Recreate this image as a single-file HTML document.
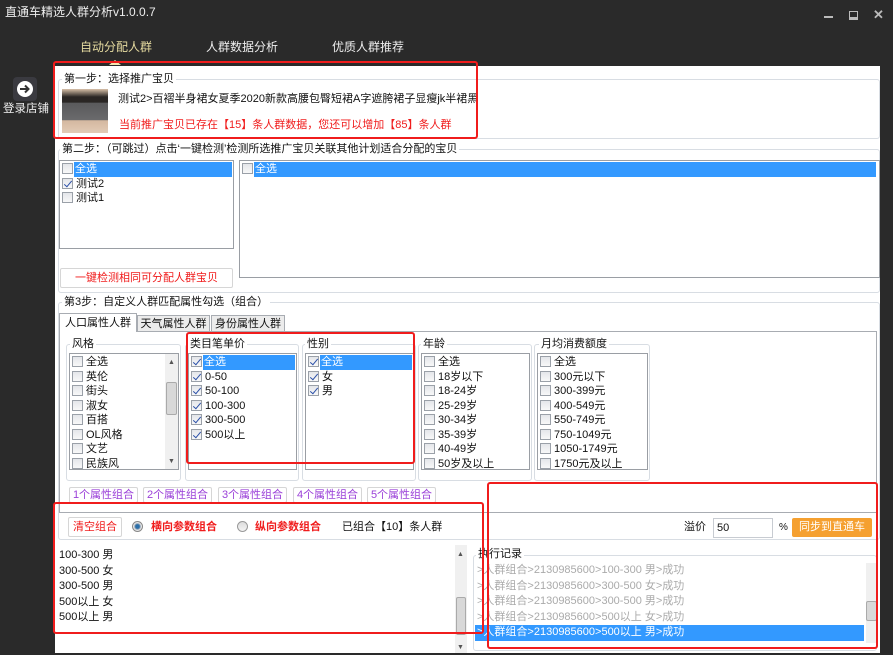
<!DOCTYPE html>
<html><head><meta charset="utf-8">
<style>
*{box-sizing:border-box;margin:0;padding:0}
body{width:893px;height:653px;overflow:hidden;background:#2a2a2a;font-family:"Liberation Sans","Noto Sans CJK SC",sans-serif;font-size:11px;color:#111;position:relative}
.a{position:absolute}
.t{position:absolute;white-space:nowrap;line-height:14px}
.grp{position:absolute;border:1px solid #d8dde3;border-radius:3px}
.lbl{position:absolute;background:#fff;padding:0 2px;white-space:nowrap;line-height:14px;font-size:11px}
.list{position:absolute;background:#fff;border:1px solid #9a9ea4}
.it{height:14.5px;line-height:14.5px;white-space:nowrap;padding-left:2px;position:relative}
.cb{display:inline-block;width:11px;height:11px;border:1px solid #9aa0a8;background:linear-gradient(#e4e6ea,#f8f8f8);vertical-align:-2px;margin-right:3px;position:relative}
.cb.c::after{content:"";position:absolute;left:3px;top:0px;width:3px;height:7px;border:solid #2a4fa8;border-width:0 1.5px 1.5px 0;transform:rotate(40deg)}
.sel{background:#3399ff;color:#fff}
.sel .cb{}
.btnp{position:absolute;height:16px;border:1px solid #d6d6d6;border-radius:2px;background:#fff;color:#9a3fd8;line-height:14px;text-align:center;font-size:11px;width:69px}
.red{position:absolute;border:2px solid #f01c1c;border-radius:3px}
.sb{position:absolute;background:#f0f0f0}
</style></head><body>
<!-- title -->
<div class="t" style="left:5px;top:5px;color:#eee;font-size:12px">直通车精选人群分析v1.0.0.7</div>
<div class="a" style="left:824px;top:16px;width:9px;height:2px;background:#bbb"></div>
<div class="a" style="left:849px;top:11px;width:9px;height:9px;border:1px solid #bbb;border-bottom:3px solid #bbb"></div>
<div class="t" style="left:873px;top:8px;color:#bbb;font-size:13px;font-weight:bold">✕</div>
<!-- tabs -->
<div class="t" style="left:80px;top:40px;color:#e6dba0;font-size:12px">自动分配人群</div>
<div class="t" style="left:206px;top:40px;color:#eee;font-size:12px">人群数据分析</div>
<div class="t" style="left:332px;top:40px;color:#eee;font-size:12px">优质人群推荐</div>
<div class="a" style="left:109px;top:60px;width:0;height:0;border-left:6px solid transparent;border-right:6px solid transparent;border-bottom:5px solid #f2e6b0"></div>
<!-- left login -->
<div class="a" style="left:13px;top:77px;width:24px;height:24px;background:#3a3a40;border-radius:4px"></div>
<svg class="a" style="left:15px;top:79px" width="20" height="20" viewBox="0 0 20 20"><circle cx="10" cy="10" r="8" fill="#fff"/><path d="M5 10h8M10 6.5l3.5 3.5-3.5 3.5" stroke="#333" stroke-width="2" fill="none"/></svg>
<div class="t" style="left:3px;top:102px;color:#eee;font-size:11.5px">登录店铺</div>
<!-- content -->
<div class="a" style="left:55px;top:66px;width:825px;height:587px;background:#fff"></div>
<div class="a" style="left:880px;top:64px;width:13px;height:589px;background:#2a2a2a"></div>
<!-- step1 -->
<div class="grp" style="left:58px;top:79px;width:822px;height:60px"></div>
<div class="lbl" style="left:62px;top:72px">第一步：选择推广宝贝</div>
<div class="a" style="left:62px;top:89px;width:46px;height:44px;background:linear-gradient(180deg,#d8c0a8 0%,#2a2624 18%,#2a2624 30%,#5a5a5c 32%,#6a6a6c 70%,#d4b8a0 72%,#e2cbb6 100%)"></div>
<div class="t" style="left:118px;top:92px;font-size:11px">测试2&gt;百褶半身裙女夏季2020新款高腰包臀短裙A字遮胯裙子显瘦jk半裙黑</div>
<div class="t" style="left:119px;top:118px;color:#f01c1c;font-size:11px">当前推广宝贝已存在【15】条人群数据，您还可以增加【85】条人群</div>
<!-- step2 -->
<div class="grp" style="left:58px;top:149px;width:822px;height:144px"></div>
<div class="lbl" style="left:60px;top:142px">第二步：（可跳过）点击‘一键检测’检测所选推广宝贝关联其他计划适合分配的宝贝</div>
<div class="list" style="left:59px;top:160px;width:175px;height:89px;padding-top:1px">
<div class="it"><span class="cb"></span><span class="sel" style="position:absolute;left:14px;top:0;width:158px;padding-left:1px">全选</span></div>
<div class="it"><span class="cb c"></span>测试2</div>
<div class="it"><span class="cb"></span>测试1</div>
</div>
<div class="list" style="left:239px;top:160px;width:641px;height:118px;padding-top:1px">
<div class="it"><span class="cb"></span><span class="sel" style="position:absolute;left:14px;top:0;width:622px;padding-left:1px">全选</span></div>
</div>
<div class="a" style="left:60px;top:268px;width:173px;height:20px;border:1px solid #d6d6d6;border-radius:2px;color:#f01c1c;text-align:center;line-height:18px">一键检测相同可分配人群宝贝</div>
<!-- step3 -->
<div class="grp" style="left:58px;top:302px;width:822px;height:238px"></div>
<div class="lbl" style="left:62px;top:295px">第3步：自定义人群匹配属性勾选（组合）</div>
<div class="a" style="left:59px;top:331px;width:818px;height:182px;border:1px solid #a8acb2;background:#fff"></div>
<div class="a" style="left:59px;top:313px;width:78px;height:19px;border:1px solid #a8acb2;border-bottom:none;background:#fff;line-height:18px;text-align:center">人口属性人群</div>
<div class="a" style="left:137px;top:315px;width:73px;height:17px;border:1px solid #a8acb2;background:#ececec;line-height:16px;text-align:center">天气属性人群</div>
<div class="a" style="left:211px;top:315px;width:74px;height:17px;border:1px solid #a8acb2;background:#ececec;line-height:16px;text-align:center">身份属性人群</div>

<div class="grp" style="left:66px;top:344px;width:115px;height:137px"></div>
<div class="lbl" style="left:70px;top:337px">风格</div>
<div class="list" style="left:69px;top:353px;width:110px;height:117px;padding-top:1px;overflow:hidden">
<div class="it"><span class="cb"></span>全选</div><div class="it"><span class="cb"></span>英伦</div><div class="it"><span class="cb"></span>街头</div><div class="it"><span class="cb"></span>淑女</div><div class="it"><span class="cb"></span>百搭</div><div class="it"><span class="cb"></span>OL风格</div><div class="it"><span class="cb"></span>文艺</div><div class="it"><span class="cb"></span>民族风</div>
<div class="sb" style="left:95px;top:0;width:13px;height:115px"></div>
<div class="a" style="left:96px;top:28px;width:11px;height:33px;background:#d8d8d8;border:1px solid #aaa;border-radius:2px"></div>
<div class="t" style="left:98px;top:2px;font-size:7px;color:#555">▲</div><div class="t" style="left:98px;top:101px;font-size:7px;color:#555">▼</div>
</div>

<div class="grp" style="left:185px;top:344px;width:114px;height:137px"></div>
<div class="lbl" style="left:188px;top:337px">类目笔单价</div>
<div class="list" style="left:188px;top:353px;width:109px;height:117px;padding-top:1px">
<div class="it"><span class="cb c"></span><span class="sel" style="position:absolute;left:14px;top:0;width:92px;padding-left:1px">全选</span></div>
<div class="it"><span class="cb c"></span>0-50</div><div class="it"><span class="cb c"></span>50-100</div><div class="it"><span class="cb c"></span>100-300</div><div class="it"><span class="cb c"></span>300-500</div><div class="it"><span class="cb c"></span>500以上</div>
</div>

<div class="grp" style="left:302px;top:344px;width:114px;height:137px"></div>
<div class="lbl" style="left:305px;top:337px">性别</div>
<div class="list" style="left:305px;top:353px;width:109px;height:117px;padding-top:1px">
<div class="it"><span class="cb c"></span><span class="sel" style="position:absolute;left:14px;top:0;width:92px;padding-left:1px">全选</span></div>
<div class="it"><span class="cb c"></span>女</div><div class="it"><span class="cb c"></span>男</div>
</div>

<div class="grp" style="left:418px;top:344px;width:114px;height:137px"></div>
<div class="lbl" style="left:421px;top:337px">年龄</div>
<div class="list" style="left:421px;top:353px;width:109px;height:117px;padding-top:1px">
<div class="it"><span class="cb"></span>全选</div><div class="it"><span class="cb"></span>18岁以下</div><div class="it"><span class="cb"></span>18-24岁</div><div class="it"><span class="cb"></span>25-29岁</div><div class="it"><span class="cb"></span>30-34岁</div><div class="it"><span class="cb"></span>35-39岁</div><div class="it"><span class="cb"></span>40-49岁</div><div class="it"><span class="cb"></span>50岁及以上</div>
</div>

<div class="grp" style="left:534px;top:344px;width:116px;height:137px"></div>
<div class="lbl" style="left:539px;top:337px">月均消费额度</div>
<div class="list" style="left:537px;top:353px;width:111px;height:117px;padding-top:1px">
<div class="it"><span class="cb"></span>全选</div><div class="it"><span class="cb"></span>300元以下</div><div class="it"><span class="cb"></span>300-399元</div><div class="it"><span class="cb"></span>400-549元</div><div class="it"><span class="cb"></span>550-749元</div><div class="it"><span class="cb"></span>750-1049元</div><div class="it"><span class="cb"></span>1050-1749元</div><div class="it"><span class="cb"></span>1750元及以上</div>
</div>

<div class="btnp" style="left:69px;top:487px">1个属性组合</div>
<div class="btnp" style="left:143px;top:487px">2个属性组合</div>
<div class="btnp" style="left:218px;top:487px">3个属性组合</div>
<div class="btnp" style="left:293px;top:487px">4个属性组合</div>
<div class="btnp" style="left:367px;top:487px">5个属性组合</div>

<!-- row -->
<div class="a" style="left:68px;top:517px;width:54px;height:20px;border:1px solid #d6d6d6;border-radius:2px;color:#f01c1c;text-align:center;line-height:18px">清空组合</div>
<div class="a" style="left:132px;top:521px;width:11px;height:11px;border-radius:50%;background:radial-gradient(circle,#2b6ea8 30%,#9ab 45%,#e8e8e8 60%);border:1px solid #888"></div>
<div class="t" style="left:151px;top:520px;color:#f01c1c;font-weight:bold">横向参数组合</div>
<div class="a" style="left:237px;top:521px;width:11px;height:11px;border-radius:50%;background:linear-gradient(#ddd,#f4f4f4);border:1px solid #999"></div>
<div class="t" style="left:255px;top:520px;color:#f01c1c;font-weight:bold">纵向参数组合</div>
<div class="t" style="left:342px;top:520px">已组合【10】条人群</div>
<div class="t" style="left:684px;top:520px">溢价</div>
<div class="a" style="left:713px;top:518px;width:60px;height:20px;border:1px solid #c8ccd2;padding-left:3px;line-height:18px;font-size:11px">50</div>
<div class="t" style="left:779px;top:521px;font-size:10px">%</div>
<div class="a" style="left:792px;top:518px;width:80px;height:19px;background:#f5a030;border-radius:2px;color:#fff;text-align:center;line-height:19px">同步到直通车</div>

<!-- bottom left -->
<div class="a" style="left:55px;top:545px;width:413px;height:108px;background:#fff;font-size:11px;line-height:15.5px;padding:3px 0 0 4px;font-family:'Liberation Sans','Noto Sans CJK SC',sans-serif">100-300 男<br>300-500 女<br>300-500 男<br>500以上 女<br>500以上 男</div>
<div class="sb" style="left:455px;top:545px;width:12px;height:108px"></div>
<div class="a" style="left:456px;top:597px;width:10px;height:38px;background:#d8d8d8;border:1px solid #aaa;border-radius:2px"></div>
<div class="t" style="left:457px;top:548px;font-size:7px;color:#555">▲</div><div class="t" style="left:457px;top:641px;font-size:7px;color:#555">▼</div>
<!-- log -->
<div class="grp" style="left:473px;top:555px;width:404px;height:96px"></div>
<div class="lbl" style="left:476px;top:547px">执行记录</div>
<div class="a" style="left:475px;top:563px;width:401px;height:80px;line-height:15.5px;color:#aaa;font-size:11px">
<div style="padding-left:2px">&gt;人群组合&gt;2130985600&gt;100-300 男&gt;成功</div>
<div style="padding-left:2px">&gt;人群组合&gt;2130985600&gt;300-500 女&gt;成功</div>
<div style="padding-left:2px">&gt;人群组合&gt;2130985600&gt;300-500 男&gt;成功</div>
<div style="padding-left:2px">&gt;人群组合&gt;2130985600&gt;500以上 女&gt;成功</div>
<div style="padding-left:2px;background:#3399ff;color:#fff;width:389px">&gt;人群组合&gt;2130985600&gt;500以上 男&gt;成功</div>
</div>
<div class="sb" style="left:866px;top:563px;width:11px;height:80px"></div>
<div class="a" style="left:866px;top:601px;width:11px;height:20px;background:#d8d8d8;border:1px solid #aaa;border-radius:2px"></div>

<!-- red boxes -->
<div class="red" style="left:53px;top:61px;width:425px;height:78px"></div>
<div class="red" style="left:186px;top:332px;width:229px;height:132px"></div>
<div class="red" style="left:53px;top:502px;width:431px;height:132px"></div>
<div class="red" style="left:487px;top:482px;width:391px;height:167px"></div>
</body></html>
